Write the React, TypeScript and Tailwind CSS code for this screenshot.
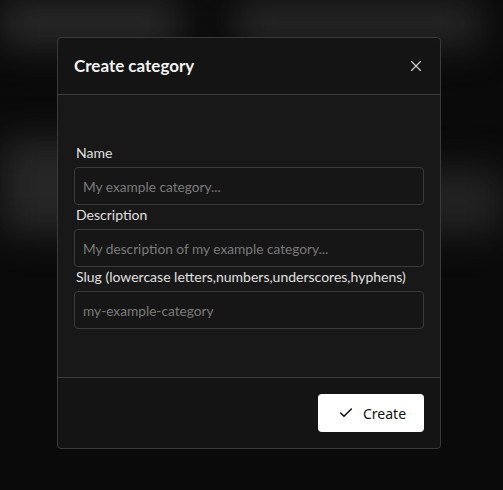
import * as React from "react"
import { X, Check } from "lucide-react"

const fields = [
  { label: "Name", placeholder: "My example category..." },
  { label: "Description", placeholder: "My description of my example category..." },
  { label: "Slug (lowercase letters,numbers,underscores,hyphens)", placeholder: "my-example-category" },
]

function BlurredPage() {
  // what sits behind the dialog, blurred out
  return (
    <div className="flex flex-col blur-[18px] h-full w-full">
      <div className="flex h-[46px] gap-[55px]">
        <div className="w-[180px] bg-[#2a2a2a]" />
        <div className="w-[245px] bg-[#272727]" />
      </div>
      <div className="h-[93px]" />
      <div className="flex h-[95px] justify-between">
        <div className="w-[130px] bg-[#262626]" />
        <div className="w-[95px] mt-[30px] bg-[#232323]" />
      </div>
    </div>
  )
}

export default function App() {
  return (
    <div
      className="relative w-[503px] h-[490px] overflow-hidden bg-[#0a0a0a]"
      style={{ fontFamily: "Lato, 'Noto Sans', sans-serif" }}
    >
      <div className="absolute inset-0">
        <BlurredPage />
      </div>

      <div className="absolute inset-0 flex items-start pl-[57px] pt-[37px]">
        <div className="w-[384px] rounded-[4px] border border-[#3a3a3a] bg-[#141414] overflow-hidden">
          {/* Header */}
          <div className="flex items-center justify-between h-[57px] px-4 border-b border-[#3a3a3a]">
            <h2 className="text-[17px] font-bold text-[#f2f2f2]">Create category</h2>
            <button className="text-[#d0d0d0] -mr-[1px]">
              <X size={18} strokeWidth={1.5} />
            </button>
          </div>

          {/* Body */}
          <div className="bg-[#181818] px-4 pt-[48px] pb-[48px] flex flex-col">
            {fields.map((f) => (
              <div key={f.label} className="flex flex-col">
                <label className="text-[14px] leading-[19px] text-[#e0e0e0] mb-[5px] pl-[2px]">{f.label}</label>
                <input
                  placeholder={f.placeholder}
                  className="h-[38px] rounded-[4px] border border-[#3a3a3a] bg-[#161616] px-2 text-[13.7px] text-[#ddd] placeholder:text-[#7a7a7a] outline-none"
                />
              </div>
            ))}
          </div>

          {/* Footer */}
          <div className="flex justify-end border-t border-[#3a3a3a] px-4 pt-[16px] pb-[16px]">
            <button
              className="flex items-center gap-[9px] h-[38px] w-[106px] rounded-[4px] bg-white pl-[20px] text-[14px] text-[#111]"
              style={{ fontFamily: "'Noto Sans', 'Open Sans', sans-serif" }}
            >
              <Check size={16} strokeWidth={2.25} />
              Create
            </button>
          </div>
        </div>
      </div>
    </div>
  )
}
